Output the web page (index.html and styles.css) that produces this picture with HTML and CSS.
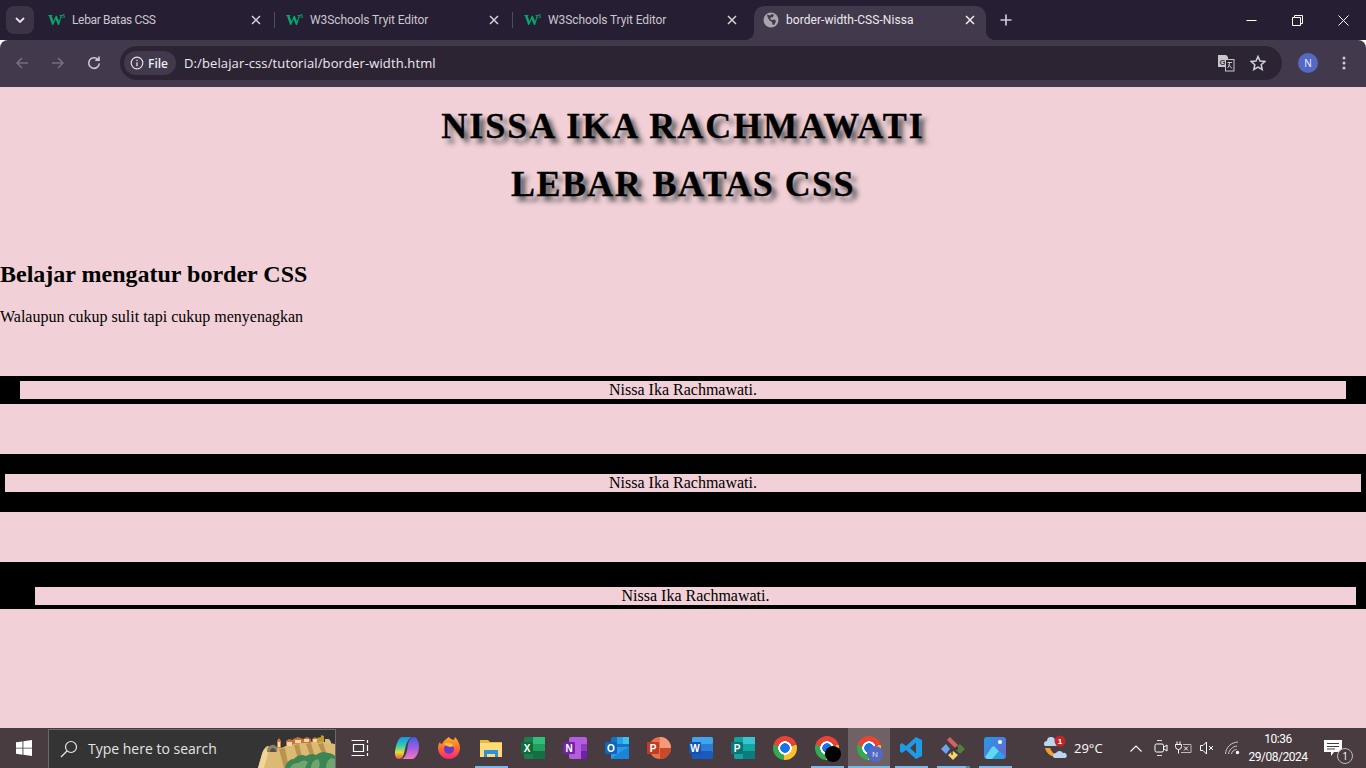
FILE: index.html
```html
<!DOCTYPE html>
<html lang="id">
<head>
<meta charset="utf-8">
<title>border-width-CSS-Nissa</title>
<link rel="stylesheet" href="styles.css">
</head>
<body>
<div class="browser">
  <header class="tabstrip">
    <button class="tabmenu"><svg width="10" height="6" viewBox="0 0 10 6"><path d="M1 1l4 4 4-4" fill="none" stroke="#e6e2ea" stroke-width="1.8"/></svg></button>
    <div class="tab">
      <span class="w3"><span class="w3-w">W</span><span class="w3-3">3</span></span>
      <span class="tab-title tab-title-tight">Lebar Batas CSS</span>
      <svg class="tab-x" width="10" height="10" viewBox="0 0 10 10"><path d="M1 1l8 8M9 1l-8 8" stroke="#d6d2da" stroke-width="1.5"/></svg>
    </div>
    <div class="tab">
      <span class="w3"><span class="w3-w">W</span><span class="w3-3">3</span></span>
      <span class="tab-title">W3Schools Tryit Editor</span>
      <svg class="tab-x" width="10" height="10" viewBox="0 0 10 10"><path d="M1 1l8 8M9 1l-8 8" stroke="#d6d2da" stroke-width="1.5"/></svg>
    </div>
    <div class="tab tab-last">
      <span class="w3"><span class="w3-w">W</span><span class="w3-3">3</span></span>
      <span class="tab-title">W3Schools Tryit Editor</span>
      <svg class="tab-x" width="10" height="10" viewBox="0 0 10 10"><path d="M1 1l8 8M9 1l-8 8" stroke="#d6d2da" stroke-width="1.5"/></svg>
    </div>
    <div class="tab tab-active">
      <svg class="globe" width="16" height="16" viewBox="0 0 16 16"><circle cx="8" cy="8" r="7.5" fill="#a9a5ae"/><path d="M4 2.5l3 1 2-1.5 2 1-1 2-2 .5-1 1.5 2 1 3-.5 1 2-2 3.500-1.500-.5-.5-2.500-2.500-1.500-2-3.500z" fill="#42394c"/></svg>
      <span class="tab-title tab-title-active">border-width-CSS-Nissa</span>
      <svg class="tab-x" width="10" height="10" viewBox="0 0 10 10"><path d="M1 1l8 8M9 1l-8 8" stroke="#f0edf2" stroke-width="1.5"/></svg>
    </div>
    <svg class="newtab" width="12" height="12" viewBox="0 0 12 12"><path d="M6 0.500v11M0.500 6h11" stroke="#cfc6d8" stroke-width="1.700"/></svg>
    <div class="winctl">
      <span class="winbtn"><svg width="11" height="11" viewBox="0 0 11 11"><path d="M0.500 5.500h10" stroke="#fff"/></svg></span>
      <span class="winbtn"><svg width="11" height="11" viewBox="0 0 11 11"><path d="M0.500 2.500h8v8h-8zM2.500 2.500v-2h8v8h-2" fill="none" stroke="#fff"/></svg></span>
      <span class="winbtn"><svg width="11" height="11" viewBox="0 0 11 11"><path d="M0.500 0.500l10 10M10.500 0.500l-10 10" stroke="#fff"/></svg></span>
    </div>
  </header>

  <nav class="toolbar">
    <svg class="navicon" width="16" height="16" viewBox="0 0 16 16"><path d="M14 8H3M8 3L3 8l5 5" fill="none" stroke="#756e7d" stroke-width="1.600"/></svg>
    <svg class="navicon" width="16" height="16" viewBox="0 0 16 16"><path d="M2 8h11M8 3l5 5-5 5" fill="none" stroke="#756e7d" stroke-width="1.600"/></svg>
    <svg class="navicon" width="16" height="16" viewBox="0 0 16 16"><path d="M13.300 8.500a5.300 5.300 0 1 1-1.400-4.100M13 1.500v3.700H9.300" fill="none" stroke="#cfcad4" stroke-width="1.600"/></svg>
    <div class="omnibox">
      <div class="chip">
        <svg width="14" height="14" viewBox="0 0 14 14"><circle cx="7" cy="7" r="5.800" fill="none" stroke="#e4e0e8" stroke-width="1.200"/><path d="M7 6.200v4M7 3.800v1.300" stroke="#e4e0e8" stroke-width="1.300"/></svg>
        <span class="chip-text">File</span>
      </div>
      <span class="url">D:/belajar-css/tutorial/border-width.html</span>
      <svg class="omni-translate" width="18" height="18" viewBox="0 0 18 18">
        <path d="M1 1h8l2 2v10H1z" fill="#c9c5cd"/><text x="2.500" y="10.500" class="tr-g">G</text>
        <rect x="8.500" y="5.500" width="8.500" height="11.500" fill="#2c2433" stroke="#c9c5cd"/><path d="M10.500 8.500h4.500M12.500 8.500c0 3-1 4.500-2 5.500M11.500 10.500l3.500 4" fill="none" stroke="#c9c5cd"/>
      </svg>
      <svg class="omni-star" width="16" height="16" viewBox="0 0 16 16"><path d="M8 1.500l2 4.500 4.800.5-3.600 3.200 1 4.800L8 12l-4.200 2.500 1-4.800L1.200 6.500 6 6z" fill="none" stroke="#d3cfd8" stroke-width="1.500"/></svg>
    </div>
    <span class="avatar">N</span>
    <svg class="kebab" width="4" height="14" viewBox="0 0 4 14"><circle cx="2" cy="2" r="1.500" fill="#cfcad4"/><circle cx="2" cy="7" r="1.500" fill="#cfcad4"/><circle cx="2" cy="12" r="1.500" fill="#cfcad4"/></svg>
  </nav>

  <main class="page">
    <h1 class="title">NISSA IKA RACHMAWATI</h1>
    <h1 class="title title-second">LEBAR BATAS CSS</h1>
    <h2 class="subtitle">Belajar mengatur border CSS</h2>
    <p class="lead">Walaupun cukup sulit tapi cukup menyenagkan</p>
    <p class="box box-one">Nissa Ika Rachmawati.</p>
    <p class="box box-two">Nissa Ika Rachmawati.</p>
    <p class="box box-three">Nissa Ika Rachmawati.</p>
  </main>

  <footer class="taskbar">
    <span class="start"><svg width="16" height="16" viewBox="0 0 18 18"><path d="M0 2.600l7.300-1v7H0zM8.300 1.400L18 0v8.600H8.300zM0 9.600h7.300v7L0 15.500zM8.300 9.600H18V18l-9.700-1.400z" fill="#fff"/></svg></span>
    <div class="search">
      <svg width="18" height="18" viewBox="0 0 18 18"><circle cx="11" cy="7" r="5.500" fill="none" stroke="#e8e8e8" stroke-width="1.200"/><path d="M7 11l-6 6" stroke="#e8e8e8" stroke-width="1.300"/></svg>
      <span class="search-text">Type here to search</span>
      <svg class="search-art" width="78" height="39" viewBox="0 0 78 39">
        <path d="M1 39l4-14c1-3 2-6 5-8l14 2 12-5 26-2 16 3v24z" fill="#dcba74"/>
        <path d="M1 39l4-14c1-3 2-5 4-6l2 6-4 14z" fill="#f0d596"/>
        <path d="M22 20l5 19h5l-4-20zM37 16l4 14 4-2-3-13zM49 15l4 11 4-1-3-11zM61 15l4 9 4-1-3-9z" fill="#b8924f"/>
        <path d="M10 23c0-5 4-8 7-7 3 1 4 4 3 7z" fill="#8d8169"/><path d="M13 23c0-3 2-4 3-4s3 1 3 4z" fill="#56503f"/>
        <path d="M20 19v-7l2-3 2 3v7z" fill="#d9793b"/><path d="M21 13h2v5h-2z" fill="#f1e0b5"/>
        <path d="M29 17v-5l3-2 4 1v5zM36 15v-5l5-2 5 2v4zM46 14v-4l4-2 4 2v4zM55 13v-3l3-2 3 2v3z" fill="#c9703d"/>
        <path d="M30 13h5v4h-5zM38 11h6v3h-6zM47 10h5v3h-5zM56 10h4v3h-4z" fill="#eed9a4"/>
        <path d="M60 14v-5l4-1v-2l3 1v6z" fill="#c09a2e"/><path d="M68 15v-5l4 0 2 3v3z" fill="#d9c080"/>
        <path d="M28 39c1-5 4-9 9-9 3-4 8-5 12-3 3-2 7-3 10-1 4-3 8-4 12-2 3 0 5 1 7 3v12z" fill="#3d8455"/>
        <path d="M33 39c2-4 5-5 9-5 3-3 6-3 9-1-1 2-2 4-3 6zM54 39c0-5 3-8 7-9 2 3 2 6 1 9zM69 39c0-5 2-8 5-10l4 1v9z" fill="#72a56e"/>
      </svg>
    </div>
    <span class="slot slot-taskview"><svg width="18" height="16" viewBox="0 0 18 16"><path d="M0.500 0.500h13M0.500 15.500h13M2.500 4.500h10v7h-10z" fill="none" stroke="#fff" stroke-width="1.200"/><path d="M16.500 0v3M16.500 5v6M16.500 13v3" stroke="#fff" stroke-width="1.200"/></svg></span>
    <div class="apps">
      <span class="slot"><svg width="24" height="22" viewBox="0 0 24 22"><defs><linearGradient id="cop1" x1="0" y1="0" x2="0" y2="1"><stop offset="0" stop-color="#1f8fe8"/><stop offset=".4" stop-color="#2fd0b0"/><stop offset=".7" stop-color="#e8d93c"/><stop offset="1" stop-color="#ee5a30"/></linearGradient><linearGradient id="cop2" x1="0" y1="0" x2="0" y2="1"><stop offset="0" stop-color="#3f5fe6"/><stop offset=".5" stop-color="#a35be0"/><stop offset="1" stop-color="#f07ac0"/></linearGradient></defs><path d="M7 0h10c-3 1-5 5-6 8l-2 8c-.5 3-2 6-5 6-3 0-4-3-4-6C0 11 3 0 7 0z" fill="url(#cop1)"/><path d="M13 7c1-4 3-7 6-7 3 0 5 5 5 10s-3 12-7 12H7c3-1 4-5 5-8z" fill="url(#cop2)"/></svg></span>
      <span class="slot"><svg width="24" height="24" viewBox="0 0 24 24"><defs><linearGradient id="ff" x1="0" y1="0" x2="0" y2="1"><stop offset="0" stop-color="#ffb02e"/><stop offset=".5" stop-color="#ff6a2b"/><stop offset="1" stop-color="#f5237e"/></linearGradient></defs><path d="M12 1c1 2 3 2 5 3 0-1 1-2 1-3 3 3 5 7 5 11a11 11 0 0 1-22 0c0-3 1-5 2-6 0 1 1 2 2 2 1-3 4-5 7-7z" fill="url(#ff)"/><circle cx="12" cy="13" r="5" fill="#6b39c9"/><path d="M7 8c3-2 7-2 10 2l-4 1c-2-1-4-1-6-3z" fill="#ffc13a"/></svg></span>
      <span class="slot slot-open"><svg width="22" height="18" viewBox="0 0 22 18"><path d="M0 1h8l2 2h12v15H0z" fill="#e8b93a"/><rect y="4" width="22" height="14" fill="#fbdc78"/><path d="M4 18v-7h14v7h-3v-3H7v3z" fill="#2f8fd8"/></svg></span>
      <span class="slot"><svg width="24" height="22" viewBox="0 0 24 22"><rect x="3" width="21" height="22" rx="2" fill="#1a7f4b"/><rect x="12" width="12" height="7" fill="#2fbf78"/><rect x="12" y="7" width="12" height="7" fill="#1f9e5f"/><rect x="12" y="14" width="12" height="8" fill="#156f40"/><rect y="5" width="12" height="12" rx="1" fill="#0f6b3c"/><text x="6" y="15" class="app-letter">X</text></svg></span>
      <span class="slot"><svg width="24" height="22" viewBox="0 0 24 22"><rect x="6" width="18" height="22" rx="2" fill="#b45de0"/><rect x="18" y="7" width="6" height="7" fill="#9339c8"/><rect x="18" y="14" width="6" height="8" fill="#7320a6"/><rect y="5" width="12" height="12" rx="1" fill="#7423a8"/><text x="6" y="15" class="app-letter">N</text></svg></span>
      <span class="slot"><svg width="24" height="22" viewBox="0 0 24 22"><rect x="6" width="18" height="22" rx="2" fill="#1373c4"/><rect x="12" width="6" height="7" fill="#29a0e8"/><rect x="18" width="6" height="7" fill="#3fc0ef"/><path d="M6 10l18 0v12H6z" fill="#2a9bea"/><path d="M6 22l9-7 9-5v12z" fill="#1a84d8"/><rect y="5" width="12" height="12" rx="1" fill="#0d66b8"/><text x="6" y="15" class="app-letter">O</text></svg></span>
      <span class="slot"><svg width="24" height="24" viewBox="0 0 24 24"><circle cx="13" cy="12" r="11" fill="#e9704c"/><path d="M13 1a11 11 0 0 1 11 11H13z" fill="#f29b7a"/><path d="M13 12h11a11 11 0 0 1-11 11z" fill="#c9492a"/><rect y="6" width="12" height="12" rx="1" fill="#bf3d22"/><text x="6" y="16" class="app-letter">P</text></svg></span>
      <span class="slot"><svg width="24" height="22" viewBox="0 0 24 22"><rect x="3" width="21" height="22" rx="2" fill="#2b7cd3"/><rect x="3" width="21" height="7" rx="2" fill="#41a5ee"/><rect x="3" y="14" width="21" height="8" rx="2" fill="#185abd"/><rect y="5" width="12" height="12" rx="1" fill="#1551b0"/><text x="6" y="15" class="app-letter">W</text></svg></span>
      <span class="slot"><svg width="24" height="22" viewBox="0 0 24 22"><rect x="3" width="21" height="22" rx="2" fill="#12a4a0"/><rect x="12" width="12" height="7" fill="#37c6d0"/><rect x="12" y="14" width="12" height="8" fill="#0c7d7f"/><rect y="5" width="12" height="12" rx="1" fill="#0a7574"/><text x="6" y="15" class="app-letter">P</text></svg></span>
      <span class="slot"><span class="chrome"></span></span>
      <span class="slot slot-open"><span class="chrome"><span class="chrome-badge chrome-badge-dark"></span></span></span>
      <span class="slot slot-active"><span class="chrome"><span class="chrome-badge">N</span></span></span>
      <span class="slot slot-open"><svg width="24" height="24" viewBox="0 0 24 24"><path d="M17 1l6 3v16l-6 3L7 14l-4 3-2-1.500V8.500L3 7l4 3zM17 6.500L11 12l6 5.500z" fill="#1f9be6" fill-rule="evenodd"/></svg></span>
      <span class="slot slot-open slot-stack"><svg width="24" height="24" viewBox="0 0 24 24"><path d="M9 13L5 8l-5 5 5 5z" fill="#6ca4ee"/><path d="M15 11l4-3 5 5-5 5-4-4z" fill="#4f7f3a"/><circle cx="15" cy="12" r="2" fill="#3a3338"/><path d="M12 15l-5 4 5 5 5-5z" fill="#f2d86a"/><path d="M6 4l3-3 8 8-3 3z" fill="#d66060"/><path d="M11 13v6" stroke="#3a3338" stroke-width="1.300"/></svg></span>
      <span class="slot slot-open"><svg width="22" height="22" viewBox="0 0 22 22"><defs><linearGradient id="ph" x1="0" y1="0" x2="1" y2="1"><stop offset="0" stop-color="#1f9ce8"/><stop offset="1" stop-color="#7a5fd0"/></linearGradient></defs><rect width="22" height="22" rx="3" fill="url(#ph)"/><path d="M1 20l7-10c1-1 2-1 3 0l8 9-2 3H3z" fill="#5fd8f2"/><path d="M8 22l7-8 6 5-1 3z" fill="#2aa1e6"/><circle cx="16" cy="5" r="2" fill="#fff"/></svg></span>
    </div>
    <div class="weather">
      <svg width="26" height="26" viewBox="0 0 26 26"><path d="M3 13c2 7 9 11 16 8-5 0-9-3-11-8z" fill="#f0a030"/><path d="M2 9a3 3 0 0 1 3-3 4 4 0 0 1 8 0 2.500 2.500 0 0 1 0 5H3a2 2 0 0 1-1-2z" fill="#bcd6ee"/><path d="M11 21a3 3 0 0 1 3-3 4 4 0 0 1 7 0 2.500 2.500 0 0 1 2 5H13a2 2 0 0 1-2-2z" fill="#bcd6ee"/><circle cx="18" cy="6" r="5.500" fill="#c4252b"/><text x="18" y="9" class="weather-badge">1</text></svg>
      <span class="temp">29°C</span>
    </div>
    <div class="tray">
      <span class="tray-icon tray-chevron"><svg width="12" height="7" viewBox="0 0 12 7"><path d="M0.500 6.500L6 1l5.500 5.500" fill="none" stroke="#fff" stroke-width="1.100"/></svg></span>
      <span class="tray-icon"><svg width="14" height="16" viewBox="0 0 14 16"><path d="M3 0.500h5M3 15.500h5" stroke="#ddd"/><rect x="1" y="4" width="8.500" height="8" rx="1.500" fill="none" stroke="#fff"/><path d="M10 7l3-2v6l-3-2" fill="none" stroke="#fff"/></svg></span>
      <span class="tray-icon"><svg width="17" height="14" viewBox="0 0 17 14"><path d="M2 0.500v3M5 0.500v3M0.500 3.500h6v2a3 3 0 0 1-6 0zM3.500 8.500v4" fill="none" stroke="#fff"/><path d="M8 3.500h8v8H6" fill="none" stroke="#bbb"/><path d="M9 5.500l4 4M13 5.500l-4 4" stroke="#fff"/></svg></span>
      <span class="tray-icon"><svg width="14" height="14" viewBox="0 0 14 14"><path d="M0.500 4.500h2.500L6.500 1v12L3 9.500H0.500z" fill="none" stroke="#fff"/><path d="M9 5l4 4M13 5l-4 4" stroke="#fff"/></svg></span>
      <span class="tray-icon tray-wifi"><svg width="16" height="14" viewBox="0 0 16 14"><path d="M0.500 13C1 6 6 1.500 13 1M3.500 13c.5-4 4-7.500 8.500-8M6.500 13c.5-2.500 2-4 5-4.500" fill="none" stroke="#ccc"/><circle cx="12.500" cy="11.500" r="1.700" fill="#fff"/></svg></span>
      <div class="clock"><span>10:36</span><span>29/08/2024</span></div>
      <span class="notify">
        <svg width="18" height="16" viewBox="0 0 18 16"><path d="M0 0h18v12h-8l-3 4v-4H0z" fill="#fff"/><path d="M3 3.500h12M3 6.500h12M3 9h8" stroke="#48393f"/></svg>
        <span class="notify-badge">1</span>
      </span>
    </div>
  </footer>
</div>
</body>
</html>
```

FILE: styles.css
```css
* { box-sizing: border-box; }
html, body { margin: 0; height: 100%; overflow: hidden; }
.browser { display: flex; flex-direction: column; height: 768px; width: 1366px; font-family: "Open Sans", "Noto Sans", sans-serif; }

/* tab strip */
.tabstrip { display: flex; align-items: flex-start; height: 40px; flex: none; background: #261e32; padding-left: 6px; }
.tabmenu { width: 28px; height: 28px; margin-top: 6px; margin-right: 3px; border: 0; border-radius: 8px; background: #3c3446; display: flex; align-items: center; justify-content: center; padding: 0; }
.tab { position: relative; display: flex; align-items: center; width: 238px; height: 34px; margin-top: 6px; padding: 0 13px 6px 11px; color: #cbc6d0; font-family: Roboto, "Open Sans", sans-serif; font-size: 12px; border-right: 1px solid transparent; }
.tab::after { content: ""; position: absolute; right: -1px; top: 6px; width: 1px; height: 16px; background: #514a5a; }
.tab-last::after { display: none; }
.tab-active { width: 232px; margin-left: 3px; height: 34px; background: #42394c; color: #ece9ef; border-radius: 10px 10px 0 0; padding: 0 11px 6px 9px; border: 0; }
.tab-active::after, .tab-active::before { content: ""; position: absolute; bottom: 0; top: auto; width: 8px; height: 8px; }
.tab-active::after { right: -8px; display: block; background: radial-gradient(circle at 100% 0, #261e32 7.500px, #42394c 8px); }
.tab-active::before { left: -8px; background: radial-gradient(circle at 0 0, #261e32 7.500px, #42394c 8px); }
.w3 { display: flex; width: 16px; height: 16px; align-items: flex-start; color: #04aa6d; font-family: "Liberation Serif", serif; font-weight: 700; flex: none; margin-right: 8px; }
.w3-w { font-size: 15px; line-height: 16px; letter-spacing: -1px; }
.w3-3 { font-size: 6px; line-height: 8px; }
.globe { flex: none; margin-right: 7px; }
.tab-title { flex: 1; white-space: nowrap; letter-spacing: -.1px; }
.tab-title-tight { letter-spacing: -.35px; }
.tab-title-active { letter-spacing: .05px; }
.tab-x { flex: none; }
.newtab { margin-left: 14px; margin-top: 14px; flex: none; }
.winctl { margin-left: auto; display: flex; }
.winbtn { width: 46px; height: 40px; display: flex; align-items: center; justify-content: center; }

/* toolbar */
.toolbar { display: flex; align-items: center; height: 47px; flex: none; background: #42394c; border-radius: 8px 8px 0 0; padding: 6px 0 7px 14px; }
.navicon { flex: none; margin-right: 20px; }
.navicon:nth-of-type(3) { margin-right: 18px; }
.omnibox { display: flex; align-items: center; width: 1162px; height: 34px; border-radius: 17px; background: #2c2433; padding: 0 16px 0 4px; }
.chip { display: flex; align-items: center; gap: 4px; width: 52px; height: 24px; border-radius: 12px; background: #42394c; padding-left: 6px; }
.chip-text { font-size: 12px; font-weight: 600; color: #f0edf3; }
.url { margin-left: 8px; font-size: 13px; letter-spacing: .12px; color: #eeeaf1; flex: 1; white-space: nowrap; }
.omni-translate { flex: none; margin-right: 15px; }
.omni-star { flex: none; }
.tr-g { font-family: "Liberation Sans", sans-serif; font-size: 8px; font-weight: 700; fill: #3a3340; }
.avatar { display: flex; align-items: center; justify-content: center; width: 20px; height: 20px; margin-left: 16px; border-radius: 50%; background: #5468c4; color: #f2f3fb; font-size: 10px; flex: none; }
.kebab { margin-left: 24px; flex: none; }

/* page */
.page { flex: 1; min-height: 0; background: #f1d0d7; color: #000; font-family: "Liberation Serif", "Times New Roman", serif; font-size: 16px; }
.title { margin: 19px 0 17px; font-size: 36px; line-height: 41px; text-align: center; letter-spacing: 2px; text-shadow: 5px 5px 5px #555; -webkit-text-stroke: .3px #000; }
.title-second { margin-top: 0; letter-spacing: 1.4px; }
.subtitle { margin: 56px 0 20px; font-size: 24px; line-height: 27px; }
.lead { margin: 0 0 16px; line-height: 18px; }
.box { margin: 50px 0; line-height: 18px; text-align: center; border-style: solid; border-color: #000; }
.box-one { border-width: 5px 20px; }
.box-two { border-width: 20px 5px; }
.box-three { border-width: 25px 10px 4px 35px; }

/* taskbar */
.taskbar { display: flex; align-items: stretch; height: 40px; flex: none; background: #483c40; }
.start { width: 48px; display: flex; align-items: center; justify-content: center; flex: none; }
.search { display: flex; align-items: center; position: relative; width: 288px; margin-top: 1px; background: #343434; border: 1px solid #6a6a6a; border-bottom: 0; padding: 0 0 1px 11px; color: #e4e4e4; flex: none; overflow: hidden; }
.search-text { margin-left: 10px; font-size: 14px; white-space: nowrap; }
.search-art { position: absolute; right: 0; bottom: 0; }
.slot { position: relative; width: 42px; display: flex; align-items: center; justify-content: center; flex: none; }
.slot-taskview { margin-left: 2px; width: 44px; margin-right: 4px; }
.apps { display: flex; flex: none; }
.slot-open::after { content: ""; position: absolute; left: 5px; right: 4px; bottom: 0; height: 2px; background: #76b9ed; }
.slot-active { background: #6e6264; }
.slot-active::after { content: ""; position: absolute; left: 0; right: 0; bottom: 0; height: 2px; background: #76b9ed; }
.slot-stack::before { content: ""; position: absolute; right: 4px; bottom: 0; width: 4px; height: 2px; background: #4e87b0; z-index: 1; }
.chrome { position: relative; display: block; width: 24px; height: 24px; border-radius: 50%; background: radial-gradient(circle, #1a73e8 0 4.500px, #fff 5px 6.500px, transparent 7px), conic-gradient(from 285deg, #ea4335 0 150deg, #fbc02d 150deg 260deg, #34a853 260deg 360deg); }
.chrome-badge { position: absolute; right: -2px; bottom: -2px; width: 16px; height: 16px; border-radius: 50%; background: #5468c4; color: #eef; font-size: 8px; line-height: 16px; text-align: center; }
.chrome-badge-dark { background: #000; }
.app-letter { font-family: "Liberation Sans", sans-serif; font-size: 10px; font-weight: 700; fill: #fff; text-anchor: middle; }
.weather { display: flex; align-items: center; gap: 6px; margin-left: 26px; flex: none; }
.temp { color: #fff; font-size: 13px; }
.weather-badge { font-family: "Liberation Sans", sans-serif; font-size: 8px; font-weight: 700; fill: #fff; text-anchor: middle; }
.tray { display: flex; align-items: center; margin-left: auto; padding-right: 10px; flex: none; }
.tray-icon { width: 23px; height: 40px; display: flex; align-items: center; justify-content: center; flex: none; }
.tray-chevron { margin-right: 2px; }
.tray-wifi { margin-left: 3px; margin-right: 2px; }
.clock { display: flex; flex-direction: column; align-items: center; width: 64px; color: #fff; font-family: Roboto, "Open Sans", sans-serif; font-size: 12px; line-height: 18px; letter-spacing: -.5px; }
.notify { position: relative; width: 46px; height: 40px; display: flex; align-items: center; justify-content: center; flex: none; }
.notify-badge { position: absolute; left: 27px; top: 20px; width: 16px; height: 16px; border-radius: 50%; border: 1px solid #bbb; background: #483c40; color: #fff; font-size: 10px; line-height: 14px; text-align: center; }
```
